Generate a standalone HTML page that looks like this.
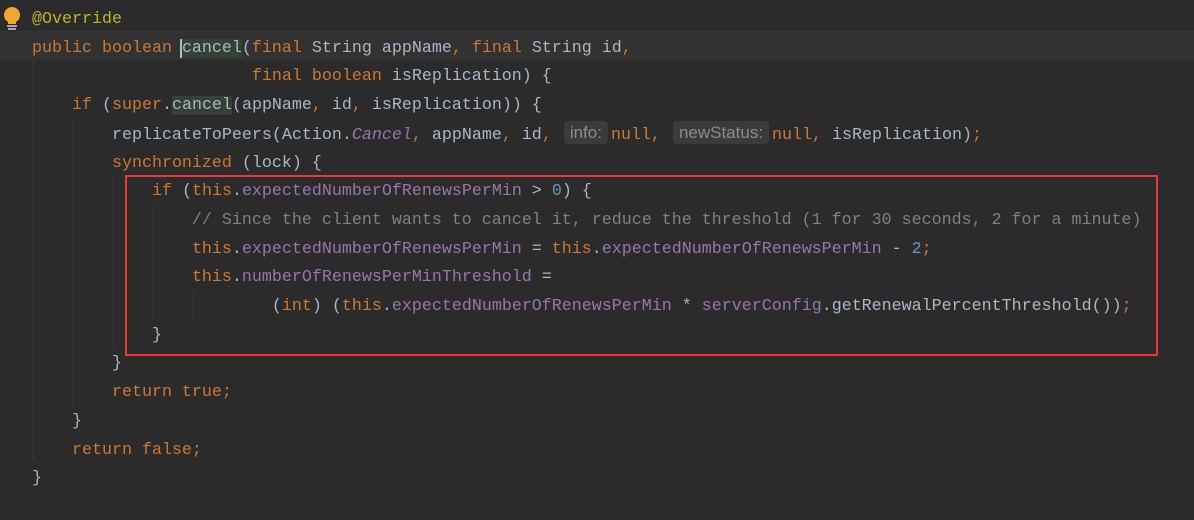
<!DOCTYPE html>
<html><head><style>
body{margin:0;width:1194px;height:520px;background:#2b2b2b;overflow:hidden;position:relative;font-family:"Liberation Mono",monospace;font-size:16.67px;color:#a9b7c6}
.l{position:absolute;left:32px;height:28.7px;line-height:28.7px;white-space:pre;margin-top:2px}
.k{color:#cc7832}.f{color:#9876aa}.c{color:#808080}.n{color:#6897bb}.a{color:#bbb529}.i{color:#9876aa;font-style:italic}
.h{display:inline-block;background:#3b3b3b;color:#8c8c8c;font-family:"Liberation Sans",sans-serif;font-size:17px;line-height:23px;border-radius:4px;padding:0 6px;margin:0 3px 0 2px;vertical-align:1px}
.g{position:absolute;width:1px;background:#393939}
.hl{background:#344134}
</style></head><body>
<div style="position:absolute;left:0;top:31px;width:1194px;height:29px;background:#323232"></div>
<div class="g" style="left:33px;top:60px;height:400px"></div>
<div class="g" style="left:73px;top:118px;height:290px"></div>
<div class="g" style="left:113px;top:175px;height:175px"></div>
<div class="g" style="left:153px;top:205px;height:115px"></div>
<div class="g" style="left:193px;top:290px;height:30px"></div>
<svg style="position:absolute;left:2px;top:6px" width="20" height="26" viewBox="0 0 20 26"><circle cx="10" cy="9" r="8" fill="#f0a732"/><rect x="6" y="14" width="8" height="4" fill="#f0a732"/><rect x="5" y="19" width="10" height="2" fill="#aaa"/><rect x="6" y="22" width="8" height="2" fill="#aaa"/></svg>
<div class="l a" style="top:4px">@Override</div>
<div class="l" style="top:32.7px"><span class="k">public boolean </span><span style="border-left:2px solid #bbb;margin-left:-2px"></span><span class="hl">cancel</span>(<span class="k">final </span>String appName<span class="k">, final </span>String id<span class="k">,</span></div>
<div class="l" style="top:61.4px">                      <span class="k">final boolean </span>isReplication) {</div>
<div class="l" style="top:90.1px">    <span class="k">if </span>(<span class="k">super</span>.<span class="hl">cancel</span>(appName<span class="k">, </span>id<span class="k">, </span>isReplication)) {</div>
<div class="l" style="top:118.8px">        replicateToPeers(Action.<span class="i">Cancel</span><span class="k">, </span>appName<span class="k">, </span>id<span class="k">, </span><span class="h">info:</span><span class="k">null, </span><span class="h">newStatus:</span><span class="k">null, </span>isReplication)<span class="k">;</span></div>
<div class="l" style="top:147.5px">        <span class="k">synchronized </span>(lock) {</div>
<div class="l" style="top:176.2px">            <span class="k">if </span>(<span class="k">this</span>.<span class="f">expectedNumberOfRenewsPerMin</span> &gt; <span class="n">0</span>) {</div>
<div class="l c" style="top:204.9px">                // Since the client wants to cancel it, reduce the threshold (1 for 30 seconds, 2 for a minute)</div>
<div class="l" style="top:233.6px">                <span class="k">this</span>.<span class="f">expectedNumberOfRenewsPerMin</span> = <span class="k">this</span>.<span class="f">expectedNumberOfRenewsPerMin</span> - <span class="n">2</span><span class="k">;</span></div>
<div class="l" style="top:262.3px">                <span class="k">this</span>.<span class="f">numberOfRenewsPerMinThreshold</span> =</div>
<div class="l" style="top:291px">                        (<span class="k">int</span>) (<span class="k">this</span>.<span class="f">expectedNumberOfRenewsPerMin</span> * <span class="f">serverConfig</span>.getRenewalPercentThreshold())<span class="k">;</span></div>
<div class="l" style="top:319.7px">            }</div>
<div class="l" style="top:348.4px">        }</div>
<div class="l" style="top:377.1px">        <span class="k">return true;</span></div>
<div class="l" style="top:405.8px">    }</div>
<div class="l" style="top:434.5px">    <span class="k">return false;</span></div>
<div class="l" style="top:463.2px">}</div>
<div style="position:absolute;left:125px;top:175px;width:1029px;height:177px;border:2px solid #e8383a"></div>
</body></html>
